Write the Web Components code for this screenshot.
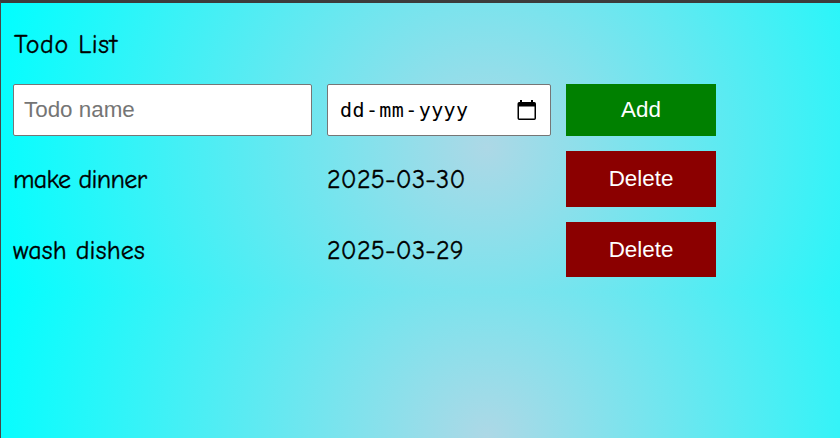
<!DOCTYPE html>
<html lang="en">
<head>
<meta charset="utf-8">
<title>Todo List</title>
<style>
html, body { margin: 0; height: 100%; overflow: hidden; }
</style>
</head>
<body>
<todo-app></todo-app>
<script>
const define = (name, html) => {
  const t = document.createElement('template');
  t.innerHTML = html;
  customElements.define(name, class extends HTMLElement {
    constructor() {
      super();
      this.attachShadow({ mode: 'open' }).append(t.content.cloneNode(true));
    }
  });
};

define('hand-text', `
<style>
:host { display: block; font: 26px/34px "Comic Sans MS", "Comic Neue", "Noto Sans", sans-serif; color: #000; white-space: nowrap; letter-spacing: var(--track, 0); -webkit-text-stroke: .35px #000; }
</style><slot></slot>`);

define('name-field', `
<style>
:host { display: flex; align-items: center; box-sizing: border-box; height: 52px; padding: 0 10px; background: #fff; border: 1px solid #767676; border-radius: 2px; color: #757575; font: 22.4px/26px "Liberation Sans", Arial, sans-serif; }
</style><span><slot></slot></span>`);

define('date-field', `
<style>
:host { display: flex; align-items: center; justify-content: space-between; box-sizing: border-box; height: 52px; padding: 0 12px 0 11px; background: #fff; border: 1px solid #767676; border-radius: 2px; color: #000; font: 20px/26px "DejaVu Sans Mono", monospace; letter-spacing: .4px; }
.date { display: flex; }
.part { padding: 0 1px; }
svg { display: block; margin-top: 2px; }
</style>
<div class="date"><span class="part">dd</span><span>-</span><span class="part">mm</span><span>-</span><span class="part">yyyy</span></div>
<svg width="22" height="22" viewBox="0 0 22 22"><path fill="#000" fill-rule="evenodd" d="M4 0h2v2h9V0h2v2h1.300q1.700 0 1.700 1.700v14.600q0 1.700-1.700 1.700H3.200Q1.500 20 1.500 18.300V3.700Q1.500 2 3.200 2H4zM3 6.500v12h15.500V6.500z"/></svg>`);

define('push-button', `
<style>
:host { display: flex; align-items: center; justify-content: center; box-sizing: border-box; background: darkred; color: #fff; font: 22.4px/26px "Liberation Sans", Arial, sans-serif; }
:host([kind="add"]) { background: green; }
</style><span><slot></slot></span>`);

define('todo-row', `
<style>
:host { display: grid; grid-template-columns: 299px 224px 150px; column-gap: 15px; align-items: stretch; }
</style><slot></slot>`);

define('todo-app', `
<style>
:host { display: block; box-sizing: border-box; height: 100%; border-top: 3px solid #3c3c3c; border-left: 1px solid #484848; padding: 25px 12px 24px; background: radial-gradient(circle, lightblue, cyan) 0 0 / 972px 289px; }
.title { margin: 0 0 22px 1px; --track: .6px; }
.rows { display: grid; grid-template-rows: 52px 56px 55px; row-gap: 15px; }
.task { align-self: center; margin-top: 2px; }
.make { --track: -.65px; }
.wash { --track: .15px; }
.date { --track: .25px; }
</style>
<hand-text class="title">Todo List</hand-text>
<div class="rows">
<todo-row><name-field>Todo name</name-field><date-field></date-field><push-button kind="add">Add</push-button></todo-row>
<todo-row><hand-text class="task make">make dinner</hand-text><hand-text class="task date">2025-03-30</hand-text><push-button>Delete</push-button></todo-row>
<todo-row><hand-text class="task wash">wash dishes</hand-text><hand-text class="task date">2025-03-29</hand-text><push-button>Delete</push-button></todo-row>
</div>`);
</script>
</body>
</html>
